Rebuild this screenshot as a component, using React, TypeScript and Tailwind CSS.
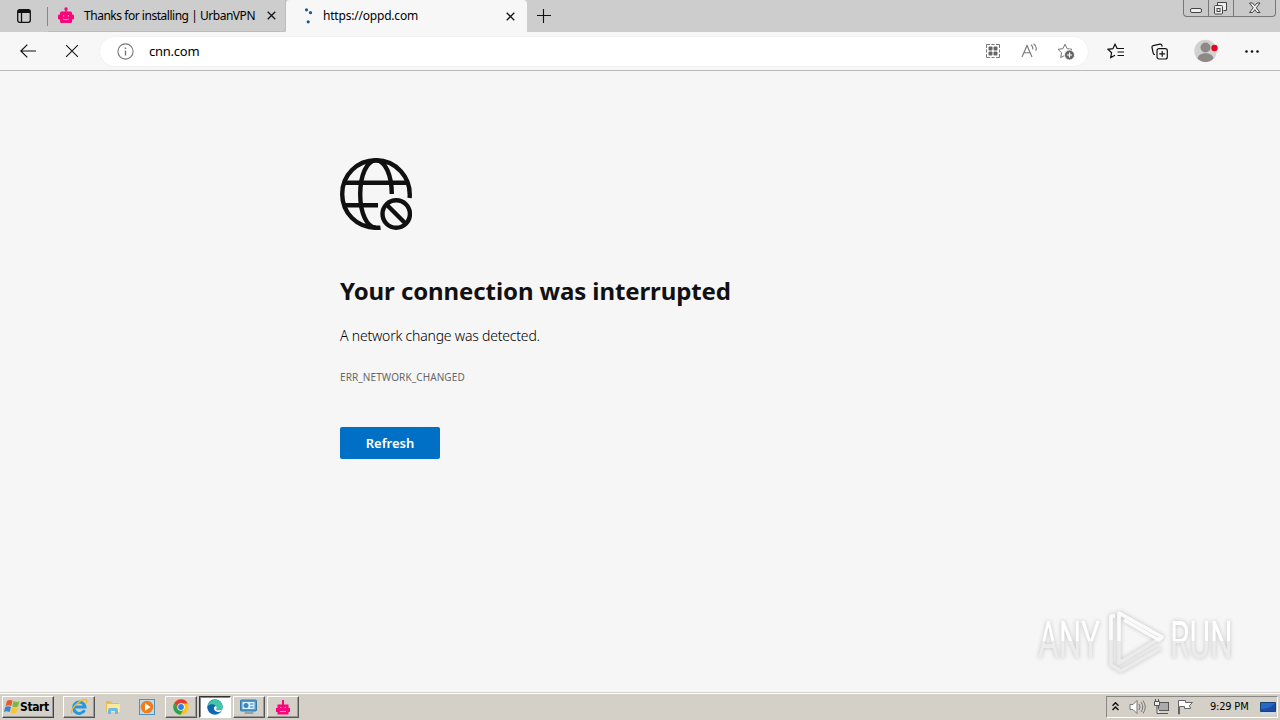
import type { ReactNode } from 'react';

const UI_FONT = "font-['Noto_Sans','Open_Sans',sans-serif]";

/* ── Shared glyphs ─────────────────────────────────────────────── */

function CloseIcon({ size = 9, width = 1.5 }: { size?: number; width?: number }) {
  return (
    <svg width={size} height={size} viewBox="0 0 10 10" fill="none" stroke="#161616" strokeWidth={width}>
      <path d="M.8.8l8.4 8.4M9.2.8L.8 9.2" />
    </svg>
  );
}

function RobotIcon() {
  return (
    <svg width="16" height="17" viewBox="0 0 16 17" fill="#f8067a">
      <circle cx="8" cy="1.9" r="1.7" />
      <path d="M7.2 2h1.6v3H7.2z" />
      <rect x="2" y="4.5" width="12" height="11.5" rx="1.5" />
      <rect x="0" y="7.5" width="16" height="5" rx="1.3" />
      <path d="M5 8.8h1.2M9.8 8.8H11" stroke="#ffb5dc" strokeWidth="1.2" />
      <path d="M5.2 12c1.5 1 4.1 1 5.6 0" stroke="#ff9bcf" fill="none" />
    </svg>
  );
}

function SquareRobotIcon() {
  return (
    <svg width="16" height="17" viewBox="0 0 16 17" fill="#f8067a">
      <path d="M7 1h2v5H7zM2.500 5.500h11v10h-11zM1 9h14v4H1z" />
      <path d="M5 8.500h1.500M9.500 8.500H11M5 12.500h6" stroke="#ff8fc8" />
    </svg>
  );
}

/* ── Tab strip ─────────────────────────────────────────────────── */

function TabStrip() {
  return (
    <div className="flex h-8 items-start bg-[#cdcdcd] text-[12px] text-black">
      <div className="flex h-8 w-12 items-center justify-center">
        <svg width="14" height="14" viewBox="0 0 14 14" fill="none" stroke="#111" strokeWidth="1.3">
          <rect x=".7" y=".7" width="12.6" height="12.6" rx="2" />
          <path d="M1 2.5h12" strokeWidth="3" />
          <path d="M4.5 3v10" />
        </svg>
      </div>
      <div className="mt-[7px] h-[19px] w-px -ml-px bg-[#858585]" />
      <div className="flex h-8 w-[238px] items-center rounded-br border-b border-r border-[#bcbcbc] pl-[10px]">
        <RobotIcon />
        <span className="ml-[10px] w-[181px] whitespace-nowrap tracking-[-0.47px]">Thanks for installing | UrbanVPN</span>
        <span className="ml-[2px]"><CloseIcon /></span>
      </div>
      <div className="flex h-8 w-[241px] items-center rounded-t-[4px] bg-[#f7f7f7] pl-[18px]">
        <svg width="10" height="16" viewBox="0 0 10 16" fill="#1c5b86">
          <circle cx="2.5" cy="1.8" r="1.6" />
          <circle cx="6.5" cy="4.7" r="1.6" />
          <circle cx="4.2" cy="13.8" r="1.6" />
        </svg>
        <span className="ml-[9px] w-[183px] whitespace-nowrap tracking-[-0.2px]">https://oppd.com</span>
        <CloseIcon />
      </div>
      <svg className="ml-[10px] mt-[9px]" width="14" height="14" viewBox="0 0 14 14" stroke="#111" strokeWidth="1.1">
        <path d="M0 6.5h14M6.5 0v14" />
      </svg>
      <div className="ml-auto mr-1 flex h-[17px] w-[93px] rounded-b border-x border-b border-[#777] bg-[#c9c9c9]">
        <svg width="91" height="16" viewBox="0 0 91 16" fill="none" stroke="#444">
          <path d="M24.5 0v16M49.5 0v16" stroke="#777" />
          <rect x="6.5" y="8.5" width="11" height="4" rx="1.5" fill="#eee" />
          <path d="M33.5 5V2.500h9v8h-3" fill="#eee" />
          <rect x="30.500" y="5.500" width="8" height="8.500" rx="1" fill="#eee" />
          <rect x="33" y="8.500" width="3" height="3" />
          <path d="M65.500 3h3l2.300 2.700L73 3h3l-3.700 4.800L76 12.500h-3l-2.200-2.800-2.300 2.800h-3l3.700-4.700z" fill="#eee" />
        </svg>
      </div>
    </div>
  );
}

/* ── Address bar ───────────────────────────────────────────────── */

const STAR = 'M8 1.200l2.100 4.500 4.900.6-3.600 3.400.9 4.900L8 12.200l-4.300 2.400.9-4.900L1 6.300l4.900-.6z';

function Toolbar() {
  return (
    <div className="flex h-[39px] items-center border-b border-[#b9b9b9] bg-[#f7f7f7]">
      <svg className="ml-5" width="16" height="14" viewBox="0 0 16 14" fill="none" stroke="#111" strokeWidth="1.2">
        <path d="M16 7H.8M7.300.6L.8 7l6.500 6.400" />
      </svg>
      <span className="ml-[29px]"><CloseIcon size={14} width={0.8} /></span>
      <div className="ml-[20px] flex h-[31px] w-[990px] items-center rounded-full border border-[#f1f1f1] bg-white pl-[17px]">
        <svg width="17" height="17" viewBox="0 0 17 17" fill="none" stroke="#777" strokeWidth="1.1">
          <circle cx="8.500" cy="8.500" r="7.600" />
          <path d="M8.500 7.500v5M8.500 4.400v1.500" strokeWidth="1.400" />
        </svg>
        <span className="ml-[15px] mt-px text-[13px] tracking-[-0.25px] text-black">cnn.com</span>
        <div className="ml-auto mr-[13px] flex items-center">
          <svg width="16" height="16" viewBox="0 0 16 16" fill="none" stroke="#777">
            <path d="M1.500 5V1.500H5M6.500 1.500h3M11 1.500h3.500V5M14.500 6.500v3M14.500 11v3.500H11M9.500 14.500h-3M5 14.500H1.500V11M1.500 9.500v-3" />
            <g fill="#666" stroke="none">
              <rect x="3.500" y="3.500" width="4" height="4" rx="1" />
              <rect x="8.500" y="3.500" width="4" height="4" rx="1" />
              <rect x="3.500" y="8.500" width="4" height="4" rx="1" />
              <rect x="8.500" y="8.500" width="4" height="4" rx="1" />
            </g>
          </svg>
          <svg className="ml-5" width="17" height="16" viewBox="0 0 17 16" fill="none" stroke="#777" strokeWidth="1.100">
            <path d="M1 14L6 2.500 11 14M2.900 9.800h6.200M10 1.800c1.500 1.200 2 2.800 1.700 4.700M12.500.8c2.600 1.600 3.300 4.300 2.200 7" />
          </svg>
          <svg className="ml-[19px]" width="18" height="17" viewBox="0 0 18 17" fill="none" stroke="#777">
            <path d={STAR} />
            <circle cx="12.500" cy="12" r="5" fill="#666" stroke="#fff" strokeWidth=".8" />
            <path d="M12.500 9.500v5M10 12h5" stroke="#fff" strokeWidth="1.200" />
          </svg>
        </div>
      </div>
      <svg className="ml-[18px]" width="18" height="16" viewBox="0 0 18 16" fill="none" stroke="#111" strokeWidth="1.200">
        <path d="M10.300 5.700L8 1.200 5.900 5.700 1 6.300l3.600 3.400-.9 4.900L8 12.200M9.500 5.500H17M10.500 9H17M10.500 12.500H17" />
      </svg>
      <svg className="ml-[26px]" width="18" height="17" viewBox="0 0 18 17" fill="none" stroke="#111" strokeWidth="1.200">
        <path d="M4 11.500c-1 0-1.600-.5-1.800-1.400L1 4.500c-.2-1 .3-1.700 1.200-1.900L9 1.100c1-.2 1.600.2 1.900 1.200l.3 1.300" />
        <rect x="6" y="5.700" width="10.300" height="10.300" rx="2" />
        <path d="M11.200 8v5.800M8.300 10.900h5.800" />
      </svg>
      <svg className="ml-[25px]" width="24" height="24" viewBox="0 0 24 24">
        <circle cx="11.500" cy="12" r="11.200" fill="#d3d1cf" />
        <circle cx="11.500" cy="8.500" r="5" fill="#8c8987" />
        <path d="M3.500 19.500c1-7 15-7 16 0-4 4.600-12 4.600-16 0z" fill="#8c8987" />
        <circle cx="20.500" cy="9" r="3.200" fill="#e2081c" />
      </svg>
      <svg className="ml-[27px]" width="14" height="3" viewBox="0 0 14 3" fill="#111">
        <circle cx="1.500" cy="1.500" r="1.300" />
        <circle cx="7" cy="1.500" r="1.300" />
        <circle cx="12.500" cy="1.500" r="1.300" />
      </svg>
    </div>
  );
}

/* ── Error page ────────────────────────────────────────────────── */

function OfflineGlobe() {
  return (
    <svg width="72" height="72" viewBox="0 0 72 72" fill="none" stroke="#111" strokeWidth="4.4">
      <path d="M69.600 40c1.800-21-14-37.800-33.600-37.800C17 2.200 2.200 17 2.200 36S17 69.800 36 69.800c2 0 3.300 0 4.500-.2" />
      <path d="M4.500 24.800h63M4.500 47.200H38" />
      <path d="M51.800 36C51.800 17 45 2.200 36 2.200S20.200 17 20.200 36 27 69.800 36 69.800" />
      <circle cx="56.200" cy="56" r="13.700" />
      <path d="M46.500 46.500l19 19" />
    </svg>
  );
}

function ErrorPage() {
  return (
    <main className="flex h-[621px] flex-col items-start bg-[#f6f6f6] pl-[340px] pt-[87px] text-[#111]">
      <OfflineGlobe />
      <h1 className="mt-[43px] whitespace-nowrap text-[24px] font-bold leading-9 tracking-[-0.1px]">
        Your connection was interrupted
      </h1>
      <p className="mt-[15px] whitespace-nowrap text-[14px] font-light leading-6 tracking-[-0.2px] text-black">A network change was detected.</p>
      <p className="mt-[19px] whitespace-nowrap text-[10px] leading-5 tracking-[0.1px] text-[#666]">ERR_NETWORK_CHANGED</p>
      <button className="mt-10 h-8 w-[100px] rounded-[2px] bg-[#0070c6] pt-[2px] text-[13px] font-semibold text-white">Refresh</button>
    </main>
  );
}

function WatermarkWord({ children }: { children: ReactNode }) {
  return (
    <span className="w-[64px]">
      <span className="block w-max origin-left scale-x-[0.61] bg-gradient-to-b from-white from-50% to-[#ececec] to-50% bg-clip-text leading-[70px] text-transparent">
        {children}
      </span>
    </span>
  );
}

function Watermark() {
  return (
    <div className="pointer-events-none absolute left-[1038px] top-[606px] flex h-[70px] w-[196px] items-center justify-between font-['Roboto','Liberation_Sans',sans-serif] text-[52px] [filter:drop-shadow(0_0_2px_#c0c0c0)]">
      <WatermarkWord>ANY</WatermarkWord>
      <svg className="shrink-0" width="58" height="66" viewBox="0 0 58 66" fill="none" stroke="#fbfbfb" strokeWidth="3.500" strokeLinejoin="round">
        <path d="M8 8H4v49l10 6 40-23" stroke="#ebebeb" />
        <path d="M8 8H4v24" />
        <path d="M12 55V5l43 24z" stroke="#ebebeb" />
        <path d="M12 33V5l43 24-3 3-35-20" />
      </svg>
      <WatermarkWord>RUN</WatermarkWord>
    </div>
  );
}

/* ── Taskbar ───────────────────────────────────────────────────── */

function TaskButton({ children, state = 'raised' }: { children: ReactNode; state?: 'raised' | 'flat' | 'active' }) {
  const look = {
    raised: 'border-t-white border-l-white border-r-[#555] border-b-[#555] shadow-[inset_-1px_-1px_#999]',
    flat: 'border-transparent',
    active: 'border-t-[#333] border-l-[#333] border-r-white border-b-white bg-white shadow-[inset_1px_1px_#888]',
  }[state];
  return <div className={`flex h-[22px] w-8 shrink-0 items-center justify-center border ${look}`}>{children}</div>;
}

function WindowsFlag() {
  return (
    <svg className="shrink-0" width="16" height="16" viewBox="0 0 16 16">
      <path d="M3 2q3-2 5.500-.3L7.200 7Q4.500 5.500 1.600 7z" fill="#e6592b" />
      <path d="M9.500 2q3 1.700 6 .2L14 7.500q-3 1.400-5.700-.2z" fill="#79b943" />
      <path d="M1.300 8Q4.200 6.500 7 8.100l-1.400 5Q3 11.700 0 13z" fill="#3a83c8" />
      <path d="M8 8.400q3 1.500 5.700.3l-1.500 5.200q-3 1.500-5.600-.3z" fill="#f8c62c" />
    </svg>
  );
}

function Taskbar() {
  return (
    <footer className="flex h-7 items-center border-t border-[#d5d2cb] bg-[#d4d0c8] pt-px text-black shadow-[inset_0_1px_#fff]">
      <div className="ml-[2px] flex h-[22px] w-[52px] items-center border border-b-[#444] border-l-white border-r-[#444] border-t-white pl-px shadow-[inset_-1px_-1px_#999]">
        <WindowsFlag />
        <span className="font-['DejaVu_Sans_Condensed','DejaVu_Sans',sans-serif] text-[12px] font-bold tracking-[-0.4px]">Start</span>
      </div>
      <div className="ml-[9px] flex gap-[2px]">
        <TaskButton>
          <svg width="18" height="18" viewBox="0 0 18 18" fill="none">
            <path d="M14.500 12.200A5.700 5.700 0 1 1 15 9H5" stroke="#2498df" strokeWidth="3" />
            <path d="M2.200 15.500C-2 14 9 1 15.800 1.500c1.600.2 1.200 2.400.3 3.800" stroke="#efb82e" strokeWidth="1.300" />
          </svg>
        </TaskButton>
        <TaskButton state="flat">
          <svg width="16" height="16" viewBox="0 0 16 16">
            <path d="M1 2h5l1 2h7v9H1z" fill="#e5bd54" />
            <path d="M2 5h13v8H2z" fill="#fbe8a0" />
            <path d="M3 15v-4q0-2 2-2h6q2 0 2 2v4h-3v-3H6v3z" fill="#6dbbe2" />
          </svg>
        </TaskButton>
        <TaskButton state="flat">
          <svg width="16" height="16" viewBox="0 0 16 16">
            <rect x=".5" y=".5" width="15" height="15" fill="#b9dcf2" stroke="#4b91c1" />
            <circle cx="8" cy="8" r="6.300" fill="#f47c17" />
            <path d="M6 4.300l5.500 3.700L6 11.700z" fill="#fff" />
          </svg>
        </TaskButton>
        <TaskButton>
          <svg width="16" height="16" viewBox="0 0 16 16">
            <circle cx="8" cy="8" r="7.700" fill="#fbc51b" />
            <path d="M1.300 4.100A7.700 7.700 0 0 1 14.800 4.500H8L5 10z" fill="#e43d2e" />
            <path d="M1.300 4.100A7.700 7.700 0 0 0 7.500 15.700L11 9.500 5 10z" fill="#2ba24c" />
            <circle cx="8" cy="8" r="3.700" fill="#fff" />
            <circle cx="8" cy="8" r="2.900" fill="#327de3" />
          </svg>
        </TaskButton>
        <TaskButton state="active">
          <svg width="16" height="16" viewBox="0 0 16 16">
            <circle cx="8" cy="8" r="7.700" fill="#118ad2" />
            <path d="M1 6C3-1 15-1 15.700 7.500c0 3.200-4 4.300-6.700 3 1.800-1.800.5-4-2-4.200C4 6 2 6.500.4 8z" fill="#42c7a2" />
            <path d="M.4 8C1.500 4.500 7 4.300 8.800 7 5.200 7.200 5 12.500 12.500 13 9 17 1 15.500.4 8z" fill="#1264ae" />
            <path d="M8.700 7c1.700 1 1 2.500.3 3.500 1.500 1.300 4.500 1 6.300-.2-1 2-2.500 2.800-4.300 2.600C6.500 12.500 6 8 8.700 7z" fill="#fff" />
          </svg>
        </TaskButton>
        <TaskButton>
          <svg width="18" height="16" viewBox="0 0 18 16">
            <rect x=".5" y="1" width="16" height="11" rx="1" fill="#4b9bd2" stroke="#397aa5" />
            <rect x="2.500" y="3" width="12" height="7" fill="#d9effb" />
            <circle cx="6" cy="6.500" r="2.500" fill="#3b87bd" />
            <path d="M10 5h3.500M10 8h3.500" stroke="#357aa9" />
            <path d="M6 12h6l2 3H4z" fill="#8ba4b6" />
          </svg>
        </TaskButton>
        <TaskButton><SquareRobotIcon /></TaskButton>
      </div>
      <div className="ml-auto mr-[2px] flex h-[22px] w-[172px] items-center border border-b-white border-l-[#888] border-r-white border-t-[#888] pl-[5px]">
        <svg className="-mt-[2px]" width="7" height="9" viewBox="0 0 7 9" fill="none" stroke="#111" strokeWidth="1.500">
          <path d="M.5 3.800l3-3 3 3M.5 8l3-3 3 3" />
        </svg>
        <svg className="ml-[10px]" width="17" height="16" viewBox="0 0 17 16" fill="none" stroke="#777">
          <path d="M1 5.500h3l4-4v13l-4-4H1z" fill="#fff" />
          <path d="M10 5q2 3 0 6M12 3q3.500 5 0 10M14 1.500q4.500 6.500 0 13" />
        </svg>
        <svg className="ml-[7px]" width="17" height="16" viewBox="0 0 17 16" fill="#eee" stroke="#555">
          <rect x="5.500" y="3.500" width="10" height="8" fill="#aaa" />
          <path d="M7 14.500h8M1.500 2.500h5v4h-5zM2.500 0v2M5.500 0v2M4 6.500v8h3" />
        </svg>
        <svg className="ml-[7px]" width="17" height="16" viewBox="0 0 17 16" fill="#fff" stroke="#666">
          <path d="M1.500 15V1.500h7v2h7l-3 3 1 3h-6v-2h-5V15z" />
        </svg>
        <span className="ml-[16px] mt-px w-[42px] whitespace-nowrap font-['DejaVu_Sans_Condensed','DejaVu_Sans',sans-serif] text-[11px] tracking-[-0.2px]">9:29 PM</span>
        <svg className="ml-[8px] mt-[2px]" width="16" height="14" viewBox="0 0 16 14">
          <path d="M.5 1.500h15v9H.5z" fill="#2469c7" stroke="#164274" />
          <path d="M1 8C6 8 12 6 15 2v8H1z" fill="#1c4ba2" />
          <path d="M2 11.500h12l1.500 2h-15z" fill="#c6dcf0" />
        </svg>
      </div>
    </footer>
  );
}

export default function App() {
  return (
    <div className={`relative h-[720px] w-[1280px] overflow-hidden bg-[#f6f6f6] ${UI_FONT}`}>
      <TabStrip />
      <Toolbar />
      <ErrorPage />
      <Watermark />
      <Taskbar />
    </div>
  );
}
